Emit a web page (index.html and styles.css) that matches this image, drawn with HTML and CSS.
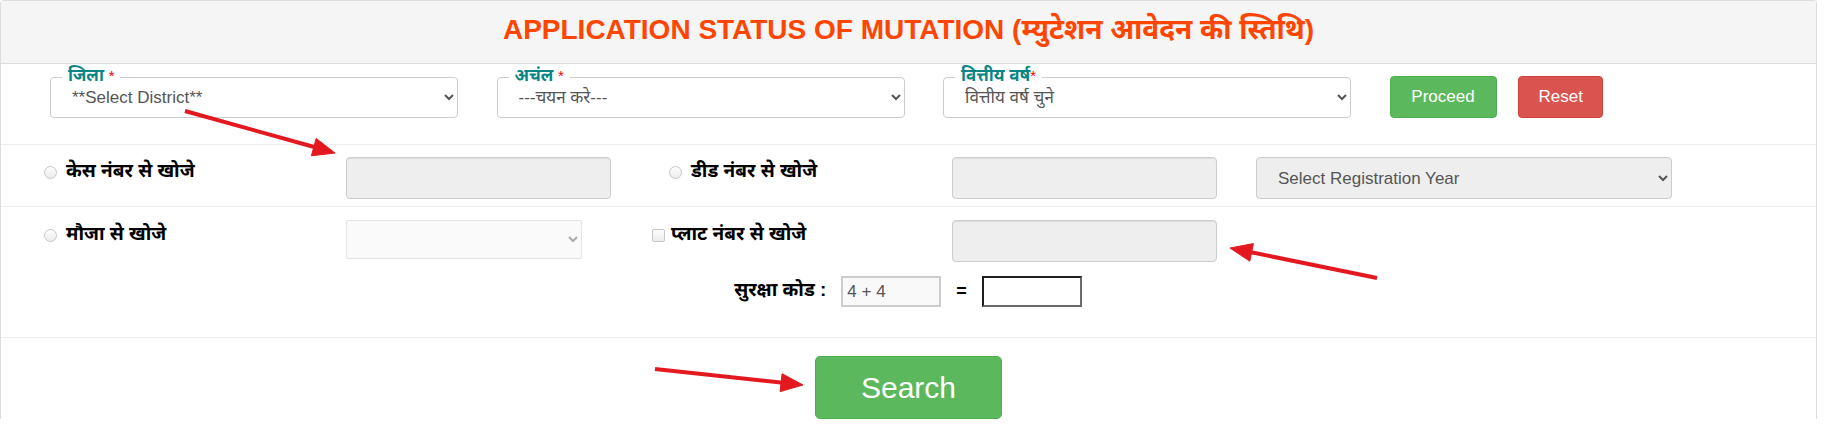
FILE: index.html
```html
<!DOCTYPE html>
<html lang="hi">
<head>
<meta charset="utf-8">
<title>Application Status of Mutation</title>
<link rel="stylesheet" href="styles.css">
</head>
<body>
<div class="page">
  <div class="panel">
    <div class="panel-heading">
      <h3 class="title">APPLICATION STATUS OF MUTATION (म्युटेशन आवेदन की स्तिथि)</h3>
    </div>

    <div class="row row-top">
      <div class="fs">
        <span class="fs-label">जिला <span class="req">*</span></span>
        <select class="fs-select"><option>**Select District**</option></select>
      </div>
      <div class="fs">
        <span class="fs-label">अचंल <span class="req">*</span></span>
        <select class="fs-select"><option>---चयन करे---</option></select>
      </div>
      <div class="fs">
        <span class="fs-label">वित्तीय वर्ष<span class="req">*</span></span>
        <select class="fs-select"><option>वित्तीय वर्ष चुने</option></select>
      </div>
      <div class="btns">
        <button class="btn btn-green">Proceed</button>
        <button class="btn btn-red">Reset</button>
      </div>
    </div>

    <div class="row row-grid row-2">
      <label class="opt"><span class="radio"></span>केस नंबर से खोजे</label>
      <input class="inp" type="text">
      <label class="opt opt-indent"><span class="radio"></span>डीड नंबर से खोजे</label>
      <input class="inp" type="text">
      <select class="reg-select"><option>Select Registration Year</option></select>
    </div>

    <div class="row row-3">
      <div class="row-grid">
        <label class="opt"><span class="radio"></span>मौजा से खोजे</label>
        <select class="mauza"><option></option></select>
        <label class="opt opt-check"><span class="check"></span>प्लाट नंबर से खोजे</label>
        <input class="inp" type="text">
      </div>
      <div class="captcha">
        <span class="cap-label">सुरक्षा कोड :</span>
        <span class="cap-q">4 + 4</span>
        <span class="cap-eq">=</span>
        <input class="cap-ans" type="text">
      </div>
    </div>

    <div class="row row-search">
      <button class="btn btn-green btn-search">Search</button>
    </div>
  </div>

  <svg class="arrows" width="1833" height="427" viewBox="0 0 1833 427">
    <g fill="#e3191f" stroke="#e3191f">
      <line x1="185" y1="111" x2="316" y2="147.5" stroke-width="4"/>
      <polygon points="335,153 311.4,155.8 316.2,138.4" stroke-width="1"/>
      <line x1="1377" y1="278" x2="1250" y2="252" stroke-width="4"/>
      <polygon points="1230,248 1253.4,243.6 1249.8,261.2" stroke-width="1"/>
      <line x1="655" y1="369" x2="783" y2="382.8" stroke-width="4"/>
      <polygon points="803,385 780.1,391.6 782.1,373.7" stroke-width="1"/>
    </g>
  </svg>
</div>
</body>
</html>
```

FILE: styles.css
```css
* { box-sizing: border-box; }

body {
  margin: 0;
  background: #fff;
  font-family: "Liberation Sans", Arial, "Noto Sans Devanagari", "Noto Sans", sans-serif;
  color: #000;
}

.page {
  position: relative;
  width: 1833px;
  height: 427px;
  overflow: hidden;
}

.panel {
  width: 1817px;
  border: 1px solid #ddd;
  border-bottom: none;
  border-radius: 4px 4px 0 0;
}

.panel-heading {
  height: 63px;
  background: #f5f5f5;
  border-bottom: 1px solid #ddd;
  display: flex;
  align-items: center;
  justify-content: center;
}

.title {
  margin: 0;
  font-size: 28px;
  font-weight: 700;
  color: #ff4500;
  letter-spacing: 0;
}

/* Row 1 */
.row-top {
  display: grid;
  grid-template-columns: 408px 408px 408px auto;
  column-gap: 38.5px;
  padding: 13px 0 26px 49px;
  border-bottom: 1px solid #eee;
}

.fs {
  position: relative;
}

.fs-select {
  width: 100%;
  height: 41px;
  border: 1px solid #ccc;
  border-radius: 4px;
  background: #fff;
  color: #555;
  font-family: inherit;
  font-size: 17px;
  padding: 0 4px 0 17px;
}

.fs-label {
  position: absolute;
  top: -12px;
  left: 12px;
  padding: 0 6px;
  background: #fff;
  color: #0a8585;
  font-weight: 700;
  font-size: 17px;
  line-height: 22px;
}

.req {
  color: #e00;
  font-weight: 400;
  font-size: 15px;
}

.btns {
  display: flex;
  gap: 21px;
  margin-top: -1px;
  align-items: flex-start;
}

.btn {
  height: 42px;
  border-radius: 4px;
  color: #fff;
  font-family: inherit;
  font-size: 17px;
  padding: 0 20px;
  cursor: pointer;
}

.btn-green {
  background: #5cb85c;
  border: 1px solid #4cae4c;
  width: 107px;
}

.btn-red {
  background: #d9534f;
  border: 1px solid #d43f3a;
  width: 85px;
}

/* search rows */
.row-grid {
  display: grid;
  grid-template-columns: 302px 303px 303px 304px 1fr;
  align-items: start;
  padding-left: 43px;
}

.row-2 {
  padding-top: 12px;
  padding-bottom: 7px;
  border-bottom: 1px solid #eee;
}

.row-3 {
  padding: 13px 0 30px 0;
  border-bottom: 1px solid #eee;
}

.opt {
  display: flex;
  align-items: center;
  gap: 9px;
  height: 30px;
  font-weight: 700;
  font-size: 19px;
  color: #000;
}

.opt-indent { margin-left: 20px; }
.opt-check { margin-left: 3px; gap: 6px; }

.radio {
  width: 13px;
  height: 13px;
  border-radius: 50%;
  border: 1px solid #c6c6c6;
  background: linear-gradient(#fdfdfd, #ececec);
  flex: none;
}

.check {
  width: 13px;
  height: 13px;
  border-radius: 2px;
  border: 1px solid #c6c6c6;
  background: linear-gradient(#fdfdfd, #ececec);
  flex: none;
}

.inp {
  width: 265px;
  height: 42px;
  background: #eee;
  border: 1px solid #ccc;
  border-radius: 4px;
  box-shadow: inset 0 1px 1px rgba(0, 0, 0, 0.075);
}

.reg-select {
  width: 416px;
  height: 42px;
  background: #eee;
  border: 1px solid #ccc;
  border-radius: 4px;
  color: #555;
  font-family: inherit;
  font-size: 17px;
  padding: 0 6px 0 17px;
}

.mauza {
  width: 236px;
  height: 39px;
  background: #fafafa;
  border: 1px solid #e4e4e4;
  border-radius: 2px;
  color: #aaa;
}

.captcha {
  display: flex;
  justify-content: center;
  align-items: center;
  margin-top: 14px;
  padding-right: 1px;
}

.cap-label {
  font-weight: 700;
  font-size: 19px;
  margin-right: 15px;
}

.cap-q {
  width: 100px;
  height: 31px;
  border: 2px solid #ccc;
  background: #f9f9f9;
  color: #555;
  font-size: 17px;
  line-height: 27px;
  padding-left: 4px;
}

.cap-eq {
  font-weight: 700;
  font-size: 18px;
  margin: 0 15px;
}

.cap-ans {
  width: 100px;
  height: 31px;
  border-width: 2px;
  border-style: solid;
  border-color: #1e1e1e #6a6a6a #6a6a6a #1e1e1e;
  background: #fff;
}

.row-search {
  display: flex;
  justify-content: center;
  padding-top: 18px;
}

.btn-search {
  width: 187px;
  height: 63px;
  font-size: 30px;
  border-radius: 5px;
}

.arrows {
  position: absolute;
  left: 0;
  top: 0;
  pointer-events: none;
}
```
